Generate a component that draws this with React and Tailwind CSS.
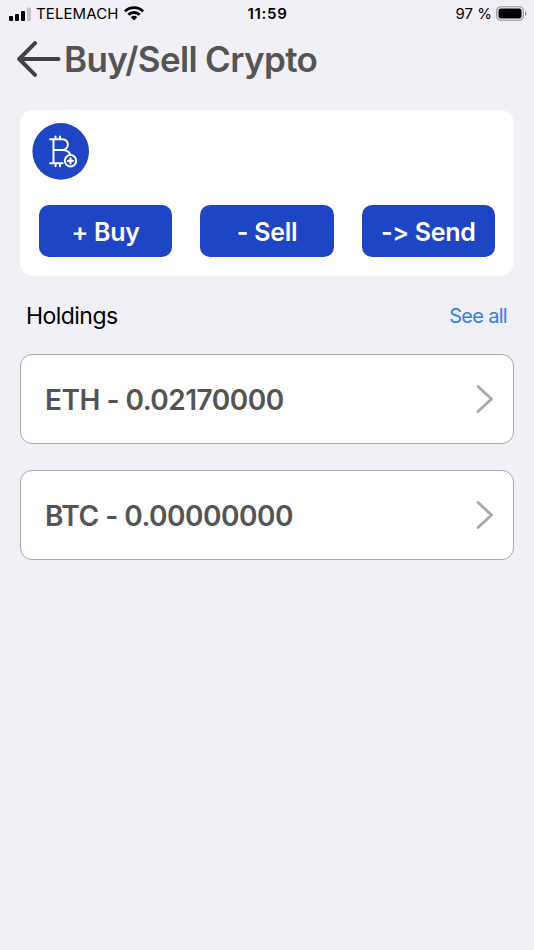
import React from 'react';

const actions = ['+ Buy', '- Sell', '-> Send'];

const holdings = [
    { symbol: 'ETH', amount: '0.02170000' },
    { symbol: 'BTC', amount: '0.00000000' },
];

const StatusBar = () => (
    <div className="grid h-[27px] grid-cols-[1fr_auto_1fr] items-center pl-[9px] pr-[7px] text-[15px] leading-none text-black">
        <div className="flex items-center">
            <svg width="22" height="14" viewBox="0 0 22 14">
                <rect x="0" y="9" width="4" height="5" rx="1" />
                <rect x="6" y="7" width="4" height="7" rx="1" />
                <rect x="12" y="4" width="4" height="10" rx="1" />
                <rect x="18" y="0.5" width="4" height="13.5" rx="1" fill="#c4c3c8" />
            </svg>
            <span className="ml-[5px] tracking-[0.1px]">TELEMACH</span>
            <svg className="ml-[5px]" width="20" height="15" viewBox="0 0 20 15" fill="none" stroke="#000" strokeWidth="2.8">
                <path d="M1 5.4a12.8 12.8 0 0 1 18 0" />
                <path d="M4.3 8.8a8.2 8.2 0 0 1 11.4 0" />
                <path d="M10 14.4l-3.2-3.2a4.5 4.5 0 0 1 6.4 0z" fill="#000" stroke="none" />
            </svg>
        </div>
        <span className="mr-px font-semibold tracking-[0.7px]">11:59</span>
        <div className="flex items-center justify-end">
            <span>97 %</span>
            <svg className="ml-1" width="31" height="15" viewBox="0 0 31 15">
                <rect x="0.75" y="0.75" width="26.5" height="13.5" rx="4" fill="none" stroke="#929196" strokeWidth="1.2" />
                <rect x="2.5" y="2.5" width="23" height="10" rx="2.3" />
                <path d="M29 5v5c2-.8 2-4.2 0-5z" fill="#929196" />
            </svg>
        </div>
    </div>
);

const BitcoinPlusIcon = () => (
    <svg width="57" height="57" viewBox="0 0 57 57" fill="none" stroke="#fff" strokeWidth="2" strokeLinecap="round">
        <circle cx="28.700" cy="28.400" r="28.300" fill="#1e45c4" stroke="none" />
        <path d="M18.200 16.200h12.300a5.400 5.400 0 0 1 0 10.800H21.500M30.500 27c4 .2 6.600 1.600 7.500 4.200M21.500 16.200v24M18.200 40.200h12.300" />
        <path d="M23.500 13.500v2.700M28 13.500v2.700M23.500 40.200v3M28 40.200v3" />
        <circle cx="38.500" cy="37.800" r="5.700" />
        <path d="M38.500 35.300v5M36 37.800h5" strokeWidth="2.200" />
    </svg>
);

const HoldingCard = ({ symbol, amount }) => (
    <button className="flex h-[90px] w-full items-center justify-between rounded-[12px] border border-[#a9a9ab] bg-white pl-6 pr-5 text-[#545454]">
        <span className="pt-[2px] text-[28px] font-semibold leading-none tracking-[-0.500px]">
            {symbol} - {amount}
        </span>
        <svg width="17" height="28" viewBox="0 0 17 28" fill="none" stroke="#a9a9a9" strokeWidth="2.800" strokeLinecap="round" strokeLinejoin="round">
            <path d="M2 1.500l13.500 12.500L2 26.500" />
        </svg>
    </button>
);

export default function App() {
    return (
        <div className="min-h-screen w-full bg-[#f1f0f6] font-['Inter',sans-serif] [font-feature-settings:'calt'_0]">
            <StatusBar />

            {/* Header */}
            <header className="flex h-[63px] items-center pl-[17px]">
                <svg width="44" height="36" viewBox="0 0 44 36" fill="none" stroke="#414141" strokeWidth="4" strokeLinecap="round" strokeLinejoin="round">
                    <path d="M18 2.200L2.200 18 18 33.800M2.200 18h39.300" />
                </svg>
                <h1 className="ml-[3px] whitespace-nowrap pt-[2px] text-[35px] font-semibold leading-none tracking-[-0.650px] text-[#545454]">
                    Buy/Sell Crypto
                </h1>
            </header>

            <main className="px-5 pt-5">
                {/* Actions */}
                <section className="h-[166px] rounded-[14px] bg-white px-[19px] pt-[13px]">
                    <div className="-ml-[7px]">
                        <BitcoinPlusIcon />
                    </div>
                    <div className="mt-[25px] grid grid-cols-3 gap-[28px]">
                        {actions.map((label) => (
                            <button
                                key={label}
                                className="h-[52px] rounded-[10px] bg-[#1e45c4] pt-[2px] text-[25px] font-semibold leading-none tracking-[-0.300px] text-white"
                            >
                                {label}
                            </button>
                        ))}
                    </div>
                </section>

                <div className="flex h-[78px] items-center justify-between pl-[6px] pr-[7px] pt-[2px]">
                    <h2 className="text-[23px] leading-none tracking-[-0.550px] text-black">Holdings</h2>
                    <a className="text-[20px] leading-none tracking-[-0.700px] text-[#347cf0]">See all</a>
                </div>

                {/* Holdings */}
                <div className="flex flex-col gap-[26px]">
                    {holdings.map((item) => (
                        <HoldingCard key={item.symbol} {...item} />
                    ))}
                </div>
            </main>
        </div>
    );
}
